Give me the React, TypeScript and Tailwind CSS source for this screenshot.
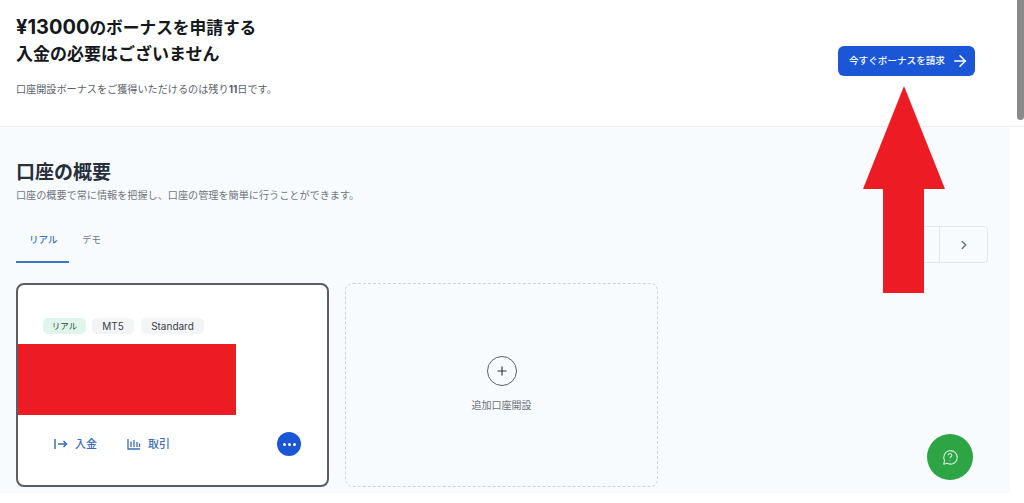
import { ArrowRight, ChevronRight, Plus } from 'lucide-react';

const font = { fontFamily: 'Inter, "Noto Sans CJK JP", sans-serif' };

function Tag({ label, className }: { label: string; className: string }) {
  return (
    <span className={`h-4 flex items-center justify-center rounded-[5px] ${className}`}>
      {label}
    </span>
  );
}

export default function App() {
  return (
    <div className="relative w-[1024px] h-[503px] overflow-hidden bg-white" style={font}>
      <header className="h-[127px] flex border-b border-[#eceef0]">
        <div className="w-[838px] pl-4 pt-[14px]">
          <h1 className="text-[16.7px] leading-[27px] font-semibold text-[#15181c]">
            <span className="text-[20px] font-bold">¥13000</span>のボーナスを申請する
          </h1>
          <h1 className="text-[17px] leading-[25px] font-semibold text-[#15181c]">入金の必要はございません</h1>
          <p className="mt-[14px] text-[10.15px] leading-4 text-[#5a5f66]">
            口座開設ボーナスをご獲得いただけるのは残り<span className="font-bold">11</span>日です。
          </p>
        </div>
        <div className="pt-[46px]">
          <button className="h-[30px] w-[137px] rounded-md bg-[#1a56d6] pl-[5px] flex items-center justify-center gap-[6px] text-[9.6px] font-medium text-white">
            今すぐボーナスを請求
            <ArrowRight className="w-[18px] h-[18px]" strokeWidth={2} />
          </button>
        </div>
      </header>

      <main className="h-[366px] w-[1010px] bg-[#f8fbfd] pl-4 pt-[34px]">
        <h2 className="text-[19px] leading-6 font-semibold text-[#27303c]">口座の概要</h2>
        <p className="mt-[3px] text-[10.15px] leading-[14px] text-[#71767d]">口座の概要で常に情報を把握し、口座の管理を簡単に行うことができます。</p>

        <div className="mt-[11px] flex h-[50px] items-start justify-between pr-[22px]">
          <div className="flex text-[9.5px] leading-[54px] font-medium">
            <span className="w-[53px] h-[50px] border-b-2 border-[#3b78c4] pl-[13px] text-[#3b78c4]">リアル</span>
            <span className="ml-[13px] text-[#71767d] font-normal">デモ</span>
          </div>
          <div className="mt-[13px] flex">
            <div className="h-[37px] w-[49px] rounded-l border border-[#e4e7ea]" />
            <div className="h-[37px] w-[49px] -ml-px rounded-r border border-[#e4e7ea] flex items-center justify-center text-[#6b7280]">
              <ChevronRight className="w-[14px] h-[14px]" strokeWidth={2.5} />
            </div>
          </div>
        </div>

        <div className="mt-5 flex gap-4">
          <section className="w-[313px] h-[204px] rounded-lg border-2 border-[#5a5e64] bg-white">
            <div className="flex pl-[25px] pt-[33px] text-[10px] text-[#3c4148]">
              <Tag label="リアル" className="w-[43px] bg-[#e0f6ec] text-[8.5px] text-[#2c4a3e]" />
              <Tag label="MT5" className="ml-[6px] w-[42px] bg-[#f2f4f5]" />
              <Tag label="Standard" className="ml-[7px] w-[63px] bg-[#f2f4f5]" />
            </div>
            <div className="mt-[10px] h-[71px] w-[218px] bg-[#ed1c24]" />
            <div className="mt-[17px] flex items-center pl-[36px] pr-[26px] text-[11px] font-medium text-[#3b6db8]">
              <svg viewBox="0 0 14 12" className="w-[14px] h-3 mr-[7px]" fill="none" stroke="currentColor" strokeWidth="1.5">
                <path d="M1 1v10M4 6h8.5M9.5 3l3 3-3 3" />
              </svg>
              <span>入金</span>
              <svg viewBox="0 0 14 12" className="w-[14px] h-3 ml-[30px] mr-[7px]" fill="none" stroke="currentColor" strokeWidth="1.3">
                <path d="M1 1v10h12M4 3.5v5.5M7 2v7M10 4v5M12.5 5.5v3.5" />
              </svg>
              <span>取引</span>
              <button className="ml-auto w-[24px] h-[24px] rounded-full bg-[#1a56d6] flex items-center justify-center gap-[2px]">
                <i className="block w-[3px] h-[3px] rounded-full bg-white" />
                <i className="block w-[3px] h-[3px] rounded-full bg-white" />
                <i className="block w-[3px] h-[3px] rounded-full bg-white" />
              </button>
            </div>
          </section>

          <section className="w-[313px] h-[204px] rounded-lg border border-dashed border-[#d0d3d6] flex flex-col items-center pt-[72px]">
            <div className="w-[30px] h-[30px] rounded-full border border-[#5c6168] flex items-center justify-center text-[#33383f]">
              <Plus className="w-[14px] h-[14px]" strokeWidth={2} />
            </div>
            <span className="mt-[12px] text-[10px] leading-[14px] text-[#6b7077]">追加口座開設</span>
          </section>
        </div>
      </main>

      <div className="absolute right-0 top-0 h-[120px] w-[7px] rounded-b bg-[#8b8b8b]" />

      <svg className="absolute left-[863px] top-[86px]" width="82" height="208" viewBox="0 0 82 208">
        <path d="M41 0L82 103H61V207H20V103H0Z" fill="#ed1c24" />
      </svg>

      <button className="absolute left-[927px] top-[434px] w-[46px] h-[46px] rounded-full bg-[#2ea545] flex items-center justify-center">
        <svg viewBox="0 0 20 20" className="w-[18px] h-[18px]" fill="none" stroke="#cdeed4" strokeWidth="1.2">
          <path d="M3 18l1-4a7.5 7.5 0 1 1 3 3Z" strokeLinejoin="round" />
          <path d="M8 8a2 2 0 1 1 3 1.8c-.7.4-1 .8-1 1.5M10 13.4v.6" />
        </svg>
      </button>
    </div>
  );
}
